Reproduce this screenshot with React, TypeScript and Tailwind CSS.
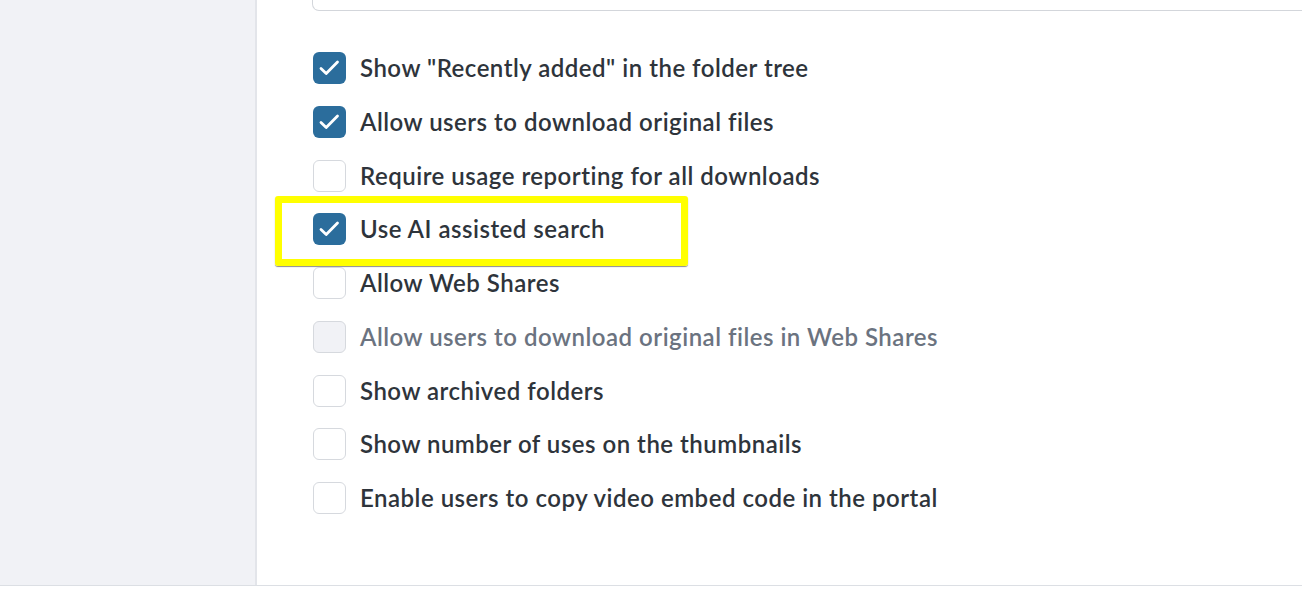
import React from "react";

type Opt = { label: string; checked?: boolean; disabled?: boolean; highlight?: boolean };

const options: Opt[] = [
  { label: 'Show "Recently added" in the folder tree', checked: true },
  { label: "Allow users to download original files", checked: true },
  { label: "Require usage reporting for all downloads" },
  { label: "Use AI assisted search", checked: true, highlight: true },
  { label: "Allow Web Shares" },
  { label: "Allow users to download original files in Web Shares", disabled: true },
  { label: "Show archived folders" },
  { label: "Show number of uses on the thumbnails" },
  { label: "Enable users to copy video embed code in the portal" },
];

const Box: React.FC<{ checked?: boolean; disabled?: boolean }> = ({ checked, disabled }) => {
  if (checked) {
    return (
      <span className="flex h-[32px] w-[33px] shrink-0 items-center justify-center rounded-[6px] bg-[#2b6d9c]">
        <svg width="33" height="32" viewBox="0 0 33 32" fill="none">
          <path d="M8 16.5l5.2 5 11.3-11.5" stroke="white" strokeWidth="2.8" strokeLinecap="round" strokeLinejoin="round" />
        </svg>
      </span>
    );
  }
  return (
    <span
      className={
        disabled
          ? "h-[32px] w-[33px] shrink-0 rounded-[6px] border border-[#d6d9de] bg-[#f1f2f6]"
          : "h-[32px] w-[33px] shrink-0 rounded-[6px] border border-[#d6d9de] bg-white"
      }
    />
  );
};

export default function App() {
  return (
    <div className="w-[1302px] h-[602px] overflow-hidden bg-white" style={{ fontFamily: "Lato, 'Noto Sans', sans-serif" }}>
      <div className="flex h-[586px] border-b border-[#dcdfe4]">
        <aside className="w-[257px] shrink-0 border-r-2 border-[#e3e5ea] bg-[#f1f2f6]" />
        <main className="flex-1 overflow-hidden">
          <div className="ml-[55px] h-[11px] w-[1100px] rounded-b-[7px] border border-t-0 border-[#d3d6db]" />
          <ul className="ml-[56px] mt-[41px] flex flex-col gap-y-[21.75px]">
            {options.map((o) => (
              <li key={o.label} className="relative flex h-[32px] items-center gap-[14px]">
                {o.highlight && (
                  <span className="absolute left-[-38px] top-[-17px] h-[70px] w-[413px] rounded-[3px] border-[7px] border-[#ffff00] shadow-[0_1px_1px_rgba(0,0,0,0.45)]" />
                )}
                <Box checked={o.checked} disabled={o.disabled} />
                <span
                  className={
                    o.disabled
                      ? "text-[24px] font-semibold leading-none tracking-[0.5px] text-[#6b7380]"
                      : "text-[24px] font-semibold leading-none tracking-[0.5px] text-[#2e343b]"
                  }
                >
                  {o.label}
                </span>
              </li>
            ))}
          </ul>
        </main>
      </div>
    </div>
  );
}
